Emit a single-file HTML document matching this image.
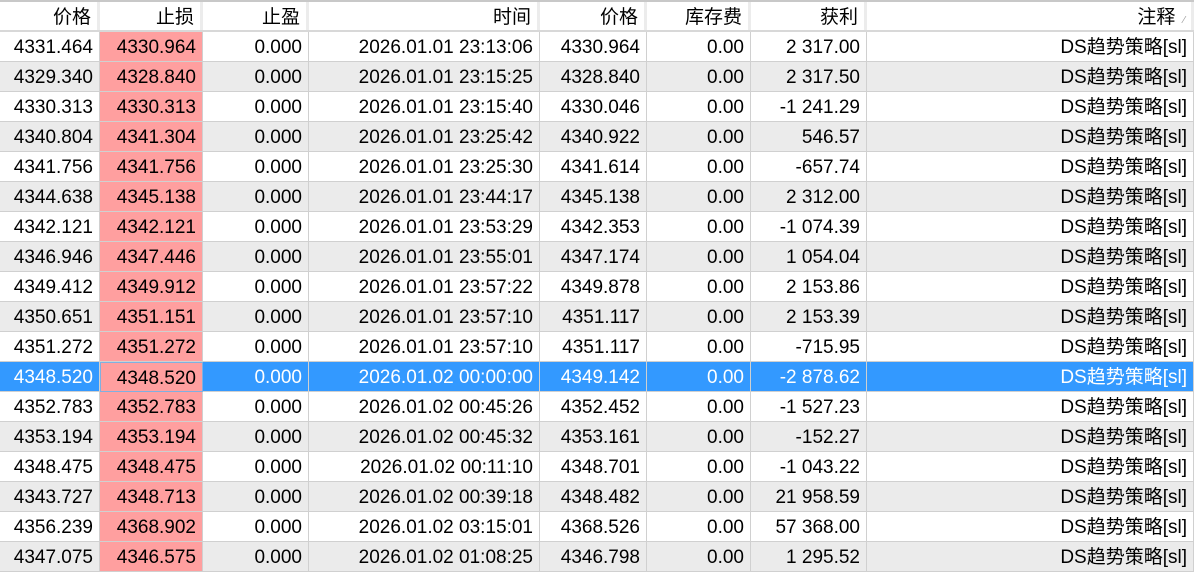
<!DOCTYPE html>
<html><head><meta charset="utf-8"><style>
*{margin:0;padding:0;box-sizing:border-box}
body{width:1194px;height:570px;overflow:hidden;background:#fff;font-family:"Liberation Sans","Noto Sans CJK SC",sans-serif;font-size:19px;color:#000;position:relative}
.row{position:absolute;left:0;width:1194px;height:30px;display:flex}
.row div{height:30px;text-align:right;padding-right:6px;white-space:nowrap;overflow:hidden;border-right:1px solid #d0d0d0;border-bottom:1px solid #d0d0d0;line-height:31px}
.h{top:0;height:32px;border-top:2px solid #c8c8c8;border-bottom:2px solid #d8d8d8}
.h div{height:28px;line-height:31px;border-right:3px solid #ececec;border-bottom:none}
.c1{width:100px}.c2{width:103px}.c3{width:106px}.c4{width:231px}.c5{width:107px}.c6{width:104px}.c7{width:116px}.c8{width:327px}
.a div{background:#ebebeb}
.row div.r{background:#ff9f9f}
.s div{background:#3399ff;color:#fff}
.s div.r{color:#000;border:1px solid #7fb0e0}
.tri{font-size:10px;color:#999;margin-left:8px}
</style></head><body>
<div class="row h"><div class="c1">价格</div><div class="c2">止损</div><div class="c3">止盈</div><div class="c4">时间</div><div class="c5">价格</div><div class="c6">库存费</div><div class="c7">获利</div><div class="c8">注释<span class="tri">⁄</span></div></div>
<div class="row" style="top:32px"><div class="c1">4331.464</div><div class="c2 r">4330.964</div><div class="c3">0.000</div><div class="c4">2026.01.01 23:13:06</div><div class="c5">4330.964</div><div class="c6">0.00</div><div class="c7">2 317.00</div><div class="c8">DS趋势策略[sl]</div></div>
<div class="row a" style="top:62px"><div class="c1">4329.340</div><div class="c2 r">4328.840</div><div class="c3">0.000</div><div class="c4">2026.01.01 23:15:25</div><div class="c5">4328.840</div><div class="c6">0.00</div><div class="c7">2 317.50</div><div class="c8">DS趋势策略[sl]</div></div>
<div class="row" style="top:92px"><div class="c1">4330.313</div><div class="c2 r">4330.313</div><div class="c3">0.000</div><div class="c4">2026.01.01 23:15:40</div><div class="c5">4330.046</div><div class="c6">0.00</div><div class="c7">-1 241.29</div><div class="c8">DS趋势策略[sl]</div></div>
<div class="row a" style="top:122px"><div class="c1">4340.804</div><div class="c2 r">4341.304</div><div class="c3">0.000</div><div class="c4">2026.01.01 23:25:42</div><div class="c5">4340.922</div><div class="c6">0.00</div><div class="c7">546.57</div><div class="c8">DS趋势策略[sl]</div></div>
<div class="row" style="top:152px"><div class="c1">4341.756</div><div class="c2 r">4341.756</div><div class="c3">0.000</div><div class="c4">2026.01.01 23:25:30</div><div class="c5">4341.614</div><div class="c6">0.00</div><div class="c7">-657.74</div><div class="c8">DS趋势策略[sl]</div></div>
<div class="row a" style="top:182px"><div class="c1">4344.638</div><div class="c2 r">4345.138</div><div class="c3">0.000</div><div class="c4">2026.01.01 23:44:17</div><div class="c5">4345.138</div><div class="c6">0.00</div><div class="c7">2 312.00</div><div class="c8">DS趋势策略[sl]</div></div>
<div class="row" style="top:212px"><div class="c1">4342.121</div><div class="c2 r">4342.121</div><div class="c3">0.000</div><div class="c4">2026.01.01 23:53:29</div><div class="c5">4342.353</div><div class="c6">0.00</div><div class="c7">-1 074.39</div><div class="c8">DS趋势策略[sl]</div></div>
<div class="row a" style="top:242px"><div class="c1">4346.946</div><div class="c2 r">4347.446</div><div class="c3">0.000</div><div class="c4">2026.01.01 23:55:01</div><div class="c5">4347.174</div><div class="c6">0.00</div><div class="c7">1 054.04</div><div class="c8">DS趋势策略[sl]</div></div>
<div class="row" style="top:272px"><div class="c1">4349.412</div><div class="c2 r">4349.912</div><div class="c3">0.000</div><div class="c4">2026.01.01 23:57:22</div><div class="c5">4349.878</div><div class="c6">0.00</div><div class="c7">2 153.86</div><div class="c8">DS趋势策略[sl]</div></div>
<div class="row a" style="top:302px"><div class="c1">4350.651</div><div class="c2 r">4351.151</div><div class="c3">0.000</div><div class="c4">2026.01.01 23:57:10</div><div class="c5">4351.117</div><div class="c6">0.00</div><div class="c7">2 153.39</div><div class="c8">DS趋势策略[sl]</div></div>
<div class="row" style="top:332px"><div class="c1">4351.272</div><div class="c2 r">4351.272</div><div class="c3">0.000</div><div class="c4">2026.01.01 23:57:10</div><div class="c5">4351.117</div><div class="c6">0.00</div><div class="c7">-715.95</div><div class="c8">DS趋势策略[sl]</div></div>
<div class="row s" style="top:362px"><div class="c1">4348.520</div><div class="c2 r">4348.520</div><div class="c3">0.000</div><div class="c4">2026.01.02 00:00:00</div><div class="c5">4349.142</div><div class="c6">0.00</div><div class="c7">-2 878.62</div><div class="c8">DS趋势策略[sl]</div></div>
<div class="row" style="top:392px"><div class="c1">4352.783</div><div class="c2 r">4352.783</div><div class="c3">0.000</div><div class="c4">2026.01.02 00:45:26</div><div class="c5">4352.452</div><div class="c6">0.00</div><div class="c7">-1 527.23</div><div class="c8">DS趋势策略[sl]</div></div>
<div class="row a" style="top:422px"><div class="c1">4353.194</div><div class="c2 r">4353.194</div><div class="c3">0.000</div><div class="c4">2026.01.02 00:45:32</div><div class="c5">4353.161</div><div class="c6">0.00</div><div class="c7">-152.27</div><div class="c8">DS趋势策略[sl]</div></div>
<div class="row" style="top:452px"><div class="c1">4348.475</div><div class="c2 r">4348.475</div><div class="c3">0.000</div><div class="c4">2026.01.02 00:11:10</div><div class="c5">4348.701</div><div class="c6">0.00</div><div class="c7">-1 043.22</div><div class="c8">DS趋势策略[sl]</div></div>
<div class="row a" style="top:482px"><div class="c1">4343.727</div><div class="c2 r">4348.713</div><div class="c3">0.000</div><div class="c4">2026.01.02 00:39:18</div><div class="c5">4348.482</div><div class="c6">0.00</div><div class="c7">21 958.59</div><div class="c8">DS趋势策略[sl]</div></div>
<div class="row" style="top:512px"><div class="c1">4356.239</div><div class="c2 r">4368.902</div><div class="c3">0.000</div><div class="c4">2026.01.02 03:15:01</div><div class="c5">4368.526</div><div class="c6">0.00</div><div class="c7">57 368.00</div><div class="c8">DS趋势策略[sl]</div></div>
<div class="row a" style="top:542px"><div class="c1">4347.075</div><div class="c2 r">4346.575</div><div class="c3">0.000</div><div class="c4">2026.01.02 01:08:25</div><div class="c5">4346.798</div><div class="c6">0.00</div><div class="c7">1 295.52</div><div class="c8">DS趋势策略[sl]</div></div>
</body></html>
